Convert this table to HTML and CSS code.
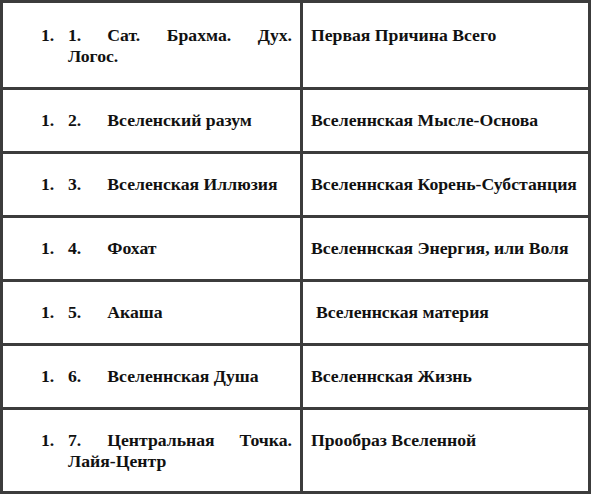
FILE: index.html
```html
<!DOCTYPE html>
<html lang="ru">
<head>
<meta charset="utf-8">
<link rel="stylesheet" href="styles.css">
</head>
<body>
<table class="grid">
  <colgroup>
    <col class="col-left">
    <col class="col-right">
  </colgroup>
  <tr class="first">
    <td class="left"><div class="item"><span class="mark">1.</span><p class="txt">1.<span class="gap"></span>Сат. Брахма. Дух. Логос.</p></div></td>
    <td class="right">Первая Причина Всего</td>
  </tr>
  <tr>
    <td class="left"><div class="item"><span class="mark">1.</span><p class="txt">2.<span class="gap"></span>Вселенский разум</p></div></td>
    <td class="right">Вселеннская Мысле-Основа</td>
  </tr>
  <tr>
    <td class="left"><div class="item"><span class="mark">1.</span><p class="txt">3.<span class="gap"></span>Вселенская Иллюзия</p></div></td>
    <td class="right">Вселеннская Корень-Субстанция</td>
  </tr>
  <tr>
    <td class="left"><div class="item"><span class="mark">1.</span><p class="txt">4.<span class="gap"></span>Фохат</p></div></td>
    <td class="right">Вселеннская Энергия, или Воля</td>
  </tr>
  <tr>
    <td class="left"><div class="item"><span class="mark">1.</span><p class="txt">5.<span class="gap"></span>Акаша</p></div></td>
    <td class="right"><span class="shift">Вселеннская материя</span></td>
  </tr>
  <tr>
    <td class="left"><div class="item"><span class="mark">1.</span><p class="txt">6.<span class="gap"></span>Вселеннская Душа</p></div></td>
    <td class="right">Вселеннская Жизнь</td>
  </tr>
  <tr class="last">
    <td class="left"><div class="item"><span class="mark">1.</span><p class="txt">7.<span class="gap"></span>Центральная Точка. Лайя-Центр</p></div></td>
    <td class="right">Прообраз Вселенной</td>
  </tr>
</table>
</body>
</html>
```

FILE: styles.css
```css
html, body {
  margin: 0;
  padding: 0;
  background: #fff;
}
body {
  font-family: "Liberation Serif", "Times New Roman", serif;
  font-weight: bold;
  font-size: 17.7px;
  color: #111;
}
.grid {
  border-collapse: collapse;
  width: 591px;
  table-layout: fixed;
}
.col-left {
  width: 300px;
}
.grid td {
  border: 3px solid #3c3c3c;
  vertical-align: top;
  padding: 20px 8px 20px 8px;
  line-height: 21px;
  white-space: normal;
}
.grid tr.first td {
  padding-top: 22px;
  padding-bottom: 20px;
}
.grid tr.last td {
  padding-bottom: 19px;
}
.grid td.left {
  padding-left: 38px;
}
.grid td.right {
  padding-left: 8px;
  padding-right: 2px;
}
.item {
  display: flex;
}
.mark {
  flex: 0 0 27px;
}
.txt {
  flex: 1;
  margin: 0;
  text-align: justify;
}
.gap {
  display: inline-block;
  width: 26px;
}
.shift {
  padding-left: 5px;
}
```
